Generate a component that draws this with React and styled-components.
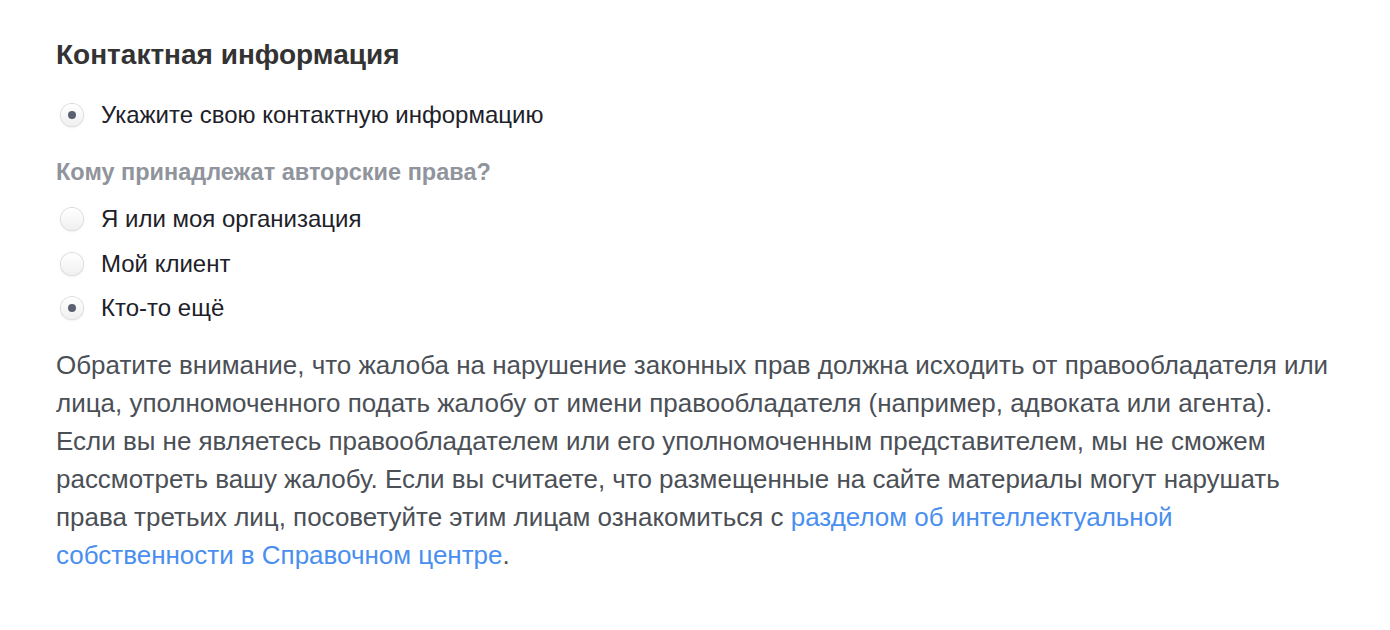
import React from "react";
import styled, { createGlobalStyle } from "styled-components";

const GlobalStyle = createGlobalStyle`
  html, body {
    margin: 0;
    padding: 0;
    background: #ffffff;
  }
  body {
    font-family: "Liberation Sans", Arial, sans-serif;
    color: #4b4f56;
  }
`;

const StyledSection = styled.section`
  padding: 39px 0 0 56px;
  width: 1277px;
`;

const StyledTitle = styled.h2`
  margin: 0 0 27px;
  font-size: 28px;
  line-height: 32px;
  font-weight: bold;
  color: #333333;
`;

const StyledQuestion = styled.div`
  margin: 26px 0 16px;
  font-size: 23.5px;
  line-height: 28px;
  font-weight: bold;
  color: #90949c;
`;

const StyledRadioList = styled.div`
  display: flex;
  flex-direction: column;
  gap: 10.5px;
`;

const StyledRadioRow = styled.label`
  display: flex;
  align-items: center;
  gap: 18px;
  height: 34px;
  padding-left: 5px;
  font-size: 24px;
  color: #1d2129;
`;

const StyledRadio = styled.span`
  position: relative;
  width: 22px;
  height: 22px;
  flex: none;
  border-radius: 50%;
  background: linear-gradient(#ffffff, #f0f0f0);
  box-shadow: 0 0 0 1px #dadde1, 0 1px 3px rgba(0, 0, 0, 0.14);

  ${(p) =>
    p.$checked &&
    `
    &::after {
      content: "";
      position: absolute;
      left: 7px;
      top: 7px;
      width: 8px;
      height: 8px;
      border-radius: 50%;
      background: #5a6170;
    }
  `}
`;

const StyledNote = styled.p`
  margin: 21px 0 0;
  font-size: 25.97px;
  line-height: 38px;
  color: #4b4f56;
`;

const StyledLink = styled.a`
  color: #4a8ff0;
  text-decoration: none;
`;

const RadioOption = ({ label, checked }) => (
  <StyledRadioRow>
    <StyledRadio $checked={checked} />
    {label}
  </StyledRadioRow>
);

const owners = [
  { label: "Я или моя организация", checked: false },
  { label: "Мой клиент", checked: false },
  { label: "Кто-то ещё", checked: true },
];

export default function App() {
  return (
    <>
      <GlobalStyle />
      <StyledSection>
        <StyledTitle>Контактная информация</StyledTitle>
        <RadioOption label="Укажите свою контактную информацию" checked />
        <StyledQuestion>Кому принадлежат авторские права?</StyledQuestion>
        <StyledRadioList>
          {owners.map((o) => (
            <RadioOption key={o.label} label={o.label} checked={o.checked} />
          ))}
        </StyledRadioList>
        <StyledNote>
          Обратите внимание, что жалоба на нарушение законных прав должна
          исходить от правообладателя или лица, уполномоченного подать жалобу
          от имени правообладателя (например, адвоката или агента). Если вы не
          являетесь правообладателем или его уполномоченным представителем, мы
          не сможем рассмотреть вашу жалобу. Если вы считаете, что размещенные
          на сайте материалы могут нарушать права третьих лиц, посоветуйте
          этим лицам ознакомиться с{" "}
          <StyledLink href="#">
            разделом об интеллектуальной собственности в Справочном центре
          </StyledLink>
          .
        </StyledNote>
      </StyledSection>
    </>
  );
}
